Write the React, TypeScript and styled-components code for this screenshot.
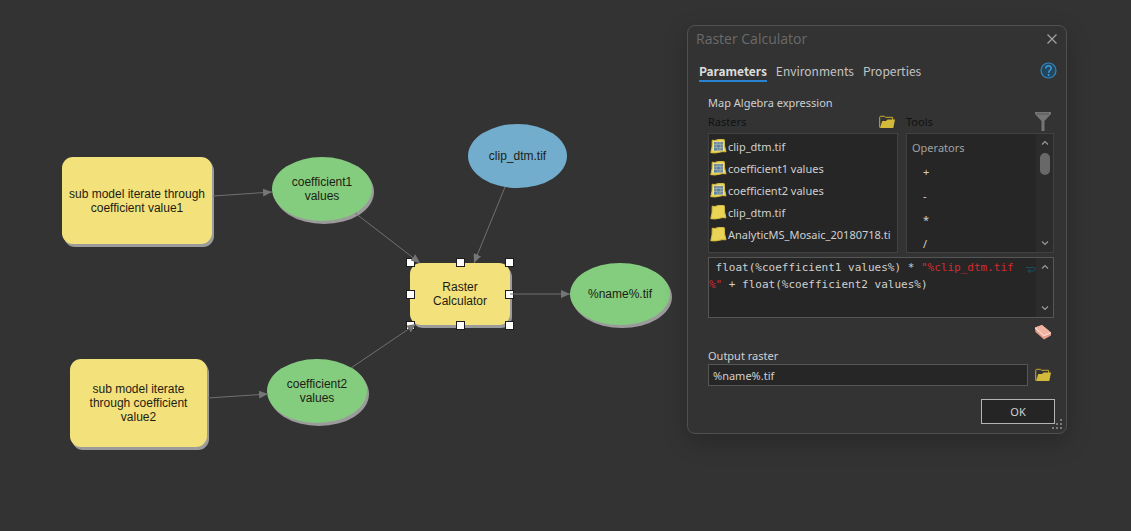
import React, { useState } from "react";
import styled, { createGlobalStyle, css } from "styled-components";

const Global = createGlobalStyle`
  * { box-sizing: border-box; }
  body {
    margin: 0;
    background: #333333;
    color: #d0d0d0;
    font-family: "Noto Sans CJK SC", "Noto Sans", sans-serif;
    font-size: 12px;
    line-height: 16px;
  }
  button, input { font: inherit; color: inherit; margin: 0; padding: 0; }
`;

const Canvas = styled.main`
  position: relative;
  min-height: 100vh;
  overflow: hidden;
  background: #333333;
`;

type NodeProps = {
  $x: number;
  $y: number;
  $w: number;
  $h: number;
  $kind: "tool" | "derived" | "input";
};

const fills = { tool: "#f3e17b", derived: "#84cc7e", input: "#72adcd" };

const DiagramNode = styled.div<NodeProps>`
  position: absolute;
  left: ${(p) => p.$x}px;
  top: ${(p) => p.$y}px;
  width: ${(p) => p.$w}px;
  height: ${(p) => p.$h}px;
  display: flex;
  align-items: center;
  justify-content: center;
  text-align: center;
  white-space: pre-line;
  background: ${(p) => fills[p.$kind]};
  border-radius: ${(p) => (p.$kind === "tool" ? "11px" : "50%")};
  color: #1d1d14;
  font-family: "Liberation Sans", Arial, sans-serif;
  font-size: 12px;
  line-height: 14px;
  ${(p) =>
    p.$kind !== "input" &&
    css`
      box-shadow: 1px 1px 0 #9b9b9b, 2px 3px 0 #9b9b9b;
    `}
`;

const Edges = styled.svg`
  position: absolute;
  left: 0;
  top: 0;
  pointer-events: none;
`;

const Handle = styled.span<{ $x: number; $y: number }>`
  position: absolute;
  left: ${(p) => p.$x}px;
  top: ${(p) => p.$y}px;
  width: 9px;
  height: 9px;
  background: #ffffff;
  border: 1px solid #1c1c1c;
`;

const Dialog = styled.section`
  position: absolute;
  top: 25px;
  right: 64px;
  width: 380px;
  display: flex;
  flex-direction: column;
  background: #333333;
  border: 1px solid #505050;
  border-radius: 8px;
  box-shadow: 0 8px 24px rgba(0, 0, 0, 0.22);
`;

const TitleBar = styled.header`
  display: flex;
  align-items: center;
  justify-content: space-between;
  height: 26px;
  padding: 0 8px;
`;

const Title = styled.h1`
  margin: 0;
  font-family: "Open Sans", "Noto Sans", sans-serif;
  font-size: 14px;
  line-height: 20px;
  font-weight: 400;
  color: #6a6a6a;
`;

const IconButton = styled.button`
  display: flex;
  align-items: center;
  justify-content: center;
  background: none;
  border: 0;
  flex: none;
`;

const TabRow = styled.div`
  display: flex;
  align-items: flex-start;
  justify-content: space-between;
  padding: 10px 9px 0 11px;
`;

const Tabs = styled.div`
  display: flex;
  gap: 9px;
`;

const Tab = styled.button<{ $active: boolean }>`
  height: 20px;
  background: none;
  border: 0;
  border-bottom: 2px solid ${(p) => (p.$active ? "#2a84d2" : "transparent")};
  color: ${(p) => (p.$active ? "#dcdcdc" : "#c4c4c4")};
  font-weight: ${(p) => (p.$active ? 700 : 400)};
`;

const Body = styled.div`
  display: flex;
  flex-direction: column;
  padding: 13px 11px 9px 20px;
  font-family: "Noto Sans", "Open Sans", sans-serif;
  font-size: 11px;
`;

const Label = styled.label`
  display: block;
`;

const Lists = styled.div`
  display: grid;
  grid-template-columns: 190px 1fr;
  column-gap: 8px;
`;

const ListHead = styled.div`
  display: flex;
  align-items: center;
  justify-content: space-between;
  height: 22px;
  padding-right: 3px;
  color: #111111;
`;

const ListBox = styled.div`
  display: flex;
  height: 120px;
  background: #262626;
  border: 1px solid #414141;
  overflow: hidden;
`;

const Items = styled.ul<{ $row: number }>`
  flex: 1;
  min-width: 0;
  margin: 0;
  padding: 2px 0 0 1px;
  list-style: none;
  overflow: hidden;

  li {
    display: flex;
    align-items: center;
    gap: 1px;
    height: ${(p) => p.$row}px;
    white-space: nowrap;
  }

  svg {
    flex: none;
  }
`;

const GroupName = styled.li`
  padding-left: 4px;
  color: #a2a2a2;
`;

const Operator = styled.li`
  padding-left: 15px;
`;

const ScrollBar = styled.div`
  display: flex;
  flex-direction: column;
  align-items: center;
  width: 17px;
  padding: 5px 0;
  background: #2c2c2c;
  flex: none;
`;

const Thumb = styled.div`
  width: 10px;
  height: 22px;
  margin-top: 6px;
  border-radius: 5px;
  background: #686868;
`;

const Spacer = styled.div`
  flex: 1;
`;

const Expression = styled.div`
  display: flex;
  height: 61px;
  margin-top: 4px;
  background: #262626;
  border: 1px solid #565656;
`;

const Code = styled.div`
  flex: 1;
  min-width: 0;
  padding-top: 1px;
  font-family: "DejaVu Sans Mono", monospace;
  font-size: 11px;
  line-height: 17px;
  white-space: pre;
  outline: none;
`;

const Literal = styled.span`
  color: #d42a30;
`;

const WrapMark = styled.div`
  padding-top: 4px;
  flex: none;
`;

const MainColumn = styled.div`
  display: flex;
  flex-direction: column;
  padding-right: 1px;
`;

const EraserRow = styled.div`
  display: flex;
  justify-content: flex-end;
  padding: 6px 2px 0 0;
  height: 30px;
  align-items: flex-start;
`;

const OutputRow = styled.div`
  display: flex;
  align-items: center;
  gap: 7px;
  padding-right: 3px;
`;

const TextInput = styled.input`
  flex: 1;
  min-width: 0;
  height: 22px;
  padding: 0 4px;
  background: #262626;
  border: 1px solid #565656;
  outline: none;
`;

const Footer = styled.footer`
  display: flex;
  justify-content: flex-end;
  margin-top: 13px;
`;

const OkButton = styled.button`
  width: 74px;
  height: 25px;
  background: #252525;
  border: 1px solid #b4b4b4;
`;

const Grip = styled.svg`
  position: absolute;
  right: 3px;
  bottom: 3px;
`;

const FolderIcon = () => (
  <svg width="16" height="14" viewBox="0 0 16 14" aria-hidden="true">
    <path d="M.7 12.5V2.2L1.4 1.3H5.6L6.5 2.3H13.6V5" fill="none" stroke="#c9ad32" />
    <path d="M1 13 3.2 6H7L8.6 4.6H16L14.3 13Z" fill="#d3ba3a" />
  </svg>
);

const LayerIcon = ({ grid }: { grid: boolean }) => (
  <svg width="17" height="16" viewBox="0 0 17 16" aria-hidden="true">
    <path
      d="M2.2 1.2Q4.5 2 7 .9T14.3 .8Q14 7 16 12.8Q12.5 12.2 9 13.3T.8 13.7Q2.6 8 2.2 1.2Z"
      fill="#e9d456"
      stroke="#d8c03e"
    />
    {grid && (
      <>
        <path d="M3.2 2.5H13.3L14.3 11.8H2.6Z" fill="#e8e1b2" />
        <rect x="4" y="3" width="9" height="8.5" fill="#71889a" />
        <path d="M4 5.7H13M4 8.6H13M7 3V11.5M10 3V11.5" stroke="#a3b4ae" strokeWidth=".8" />
        <rect x="7.3" y="6" width="2.4" height="2.3" fill="#4a7fa8" />
        <rect x="4" y="9" width="2.7" height="2.3" fill="#5285a8" />
      </>
    )}
  </svg>
);

const Chevron = ({ down = false }: { down?: boolean }) => (
  <svg width="8" height="8" viewBox="0 0 8 8" aria-hidden="true">
    <path
      d={down ? "M1 2.5 4 5.5 7 2.5" : "M1 5.5 4 2.5 7 5.5"}
      fill="none"
      stroke="#9a9a9a"
      strokeWidth="1.2"
    />
  </svg>
);

const edges = [
  [213, 196, 272, 192],
  [355, 213, 420, 263],
  [505, 187, 474, 263],
  [510, 294, 570, 294],
  [208, 398, 268, 394],
  [351, 368, 416, 324],
];

const handles = [
  [406, 258], [456, 258], [505, 258],
  [406, 290], [505, 290],
  [406, 321], [456, 321], [505, 321],
];

const rasters = [
  { name: "clip_dtm.tif", grid: true },
  { name: "coefficient1 values", grid: true },
  { name: "coefficient2 values", grid: true },
  { name: "clip_dtm.tif", grid: false },
  { name: "AnalyticMS_Mosaic_20180718.ti", grid: false },
];

const tabNames = ["Parameters", "Environments", "Properties"];

export default function App() {
  const [tab, setTab] = useState("Parameters");
  const [output, setOutput] = useState("%name%.tif");

  return (
    <>
      <Global />
      <Canvas>
        <DiagramNode $kind="tool" $x={62} $y={157} $w={150} $h={87}>
          {"sub model iterate through\ncoefficient value1"}
        </DiagramNode>
        <DiagramNode $kind="tool" $x={70} $y={359} $w={137} $h={88}>
          {"sub model iterate\nthrough coefficient\nvalue2"}
        </DiagramNode>
        <DiagramNode $kind="derived" $x={272} $y={157} $w={100} $h={64}>
          {"coefficient1\nvalues"}
        </DiagramNode>
        <DiagramNode $kind="derived" $x={267} $y={359} $w={100} $h={64}>
          {"coefficient2\nvalues"}
        </DiagramNode>
        <DiagramNode $kind="input" $x={468} $y={124} $w={99} $h={64}>
          clip_dtm.tif
        </DiagramNode>
        <DiagramNode $kind="tool" $x={410} $y={263} $w={100} $h={62}>
          {"Raster\nCalculator"}
        </DiagramNode>
        <DiagramNode $kind="derived" $x={570} $y={263} $w={100} $h={62}>
          %name%.tif
        </DiagramNode>
        {handles.map(([x, y]) => (
          <Handle key={`${x}-${y}`} $x={x} $y={y} />
        ))}
        <Edges width="687" height="531" aria-hidden="true">
          <defs>
            <marker
              id="head"
              markerUnits="userSpaceOnUse"
              markerWidth="9"
              markerHeight="8"
              refX="9"
              refY="4"
              orient="auto"
            >
              <path d="M0 0 9 4 0 8Z" fill="#757575" />
            </marker>
          </defs>
          {edges.map(([x1, y1, x2, y2]) => (
            <line
              key={`${x1}-${y1}`}
              x1={x1}
              y1={y1}
              x2={x2}
              y2={y2}
              stroke="#707070"
              markerEnd="url(#head)"
            />
          ))}
        </Edges>

        <Dialog role="dialog" aria-labelledby="dialog-title">
          <TitleBar>
            <Title id="dialog-title">Raster Calculator</Title>
            <IconButton aria-label="Close">
              <svg width="12" height="12" viewBox="0 0 12 12" aria-hidden="true">
                <path d="M1.5 1.5 10.5 10.5M10.5 1.5 1.5 10.5" stroke="#a0a0a0" strokeWidth="1.3" />
              </svg>
            </IconButton>
          </TitleBar>

          <TabRow>
            <Tabs role="tablist">
              {tabNames.map((name) => (
                <Tab
                  key={name}
                  role="tab"
                  aria-selected={tab === name}
                  $active={tab === name}
                  onClick={() => setTab(name)}
                >
                  {name}
                </Tab>
              ))}
            </Tabs>
            <IconButton aria-label="Help">
              <svg width="17" height="17" viewBox="0 0 17 17" aria-hidden="true">
                <circle cx="8.5" cy="8.5" r="7.5" fill="#23465f" stroke="#3088c4" strokeWidth="1.2" />
                <path
                  d="M5.8 6.5C5.8 2.8 11.2 2.9 11.2 6.2C11.2 8.3 8.6 8.2 8.6 10.8"
                  fill="none"
                  stroke="#3f9bd8"
                  strokeWidth="1.5"
                />
                <circle cx="8.6" cy="13" r="1" fill="#3f9bd8" />
              </svg>
            </IconButton>
          </TabRow>

          <Body>
            <MainColumn>
              <Label id="expression-label">Map Algebra expression</Label>
              <Lists>
                <div>
                  <ListHead>
                    <span>Rasters</span>
                    <IconButton aria-label="Browse rasters">
                      <FolderIcon />
                    </IconButton>
                  </ListHead>
                  <ListBox>
                    <Items $row={22}>
                      {rasters.map((r, i) => (
                        <li key={i}>
                          <LayerIcon grid={r.grid} />
                          <span>{r.name}</span>
                        </li>
                      ))}
                    </Items>
                  </ListBox>
                </div>
                <div>
                  <ListHead>
                    <span>Tools</span>
                    <IconButton aria-label="Filter tools">
                      <svg width="16" height="20" viewBox="0 0 16 20" aria-hidden="true">
                        <path d="M0 0H16V2L9.5 9V19H6.500V9L0 2Z" fill="#757575" />
                        <path d="M2 2H14" stroke="#5a5a5a" />
                      </svg>
                    </IconButton>
                  </ListHead>
                  <ListBox>
                    <Items $row={24}>
                      <GroupName>Operators</GroupName>
                      {["+", "-", "*", "/"].map((op) => (
                        <Operator key={op}>{op}</Operator>
                      ))}
                    </Items>
                    <ScrollBar>
                      <Chevron />
                      <Thumb />
                      <Spacer />
                      <Chevron down />
                    </ScrollBar>
                  </ListBox>
                </div>
              </Lists>

              <Expression>
                <Code
                  role="textbox"
                  aria-multiline="true"
                  aria-labelledby="expression-label"
                  contentEditable
                  suppressContentEditableWarning
                  spellCheck={false}
                >
                  <div>
                    {" float(%coefficient1 values%) * "}
                    <Literal>"%clip_dtm.tif</Literal>
                  </div>
                  <div>
                    <Literal>%"</Literal>
                    {" + float(%coefficient2 values%)"}
                  </div>
                </Code>
                <WrapMark>
                  <svg width="10" height="8" viewBox="0 0 10 8" aria-hidden="true">
                    <path d="M0 1.5H7.5Q9 1.5 9 3T7.5 5H2M4 3 2 5 4 7" fill="none" stroke="#1d4f60" />
                  </svg>
                </WrapMark>
                <ScrollBar>
                  <Chevron />
                  <Spacer />
                  <Chevron down />
                </ScrollBar>
              </Expression>

              <EraserRow>
                <IconButton aria-label="Clear expression">
                  <svg width="18" height="16" viewBox="0 0 18 16" aria-hidden="true">
                    <path d="M1 3.5 8 1 17 8.5V11.5L10 15.5 1.5 8Z" fill="#e39d8a" />
                    <path d="M1 3.5 8 1 17 8.5 9.8 11.5Z" fill="#efb3a2" />
                    <path d="M1.2 4 9.8 11.8 17 8.8" fill="none" stroke="#f8dcd2" strokeWidth="1.1" />
                  </svg>
                </IconButton>
              </EraserRow>

              <Label htmlFor="output-raster">Output raster</Label>
              <OutputRow>
                <TextInput
                  id="output-raster"
                  value={output}
                  onChange={(e) => setOutput(e.target.value)}
                />
                <IconButton aria-label="Browse output raster">
                  <FolderIcon />
                </IconButton>
              </OutputRow>
            </MainColumn>
            <Footer>
              <OkButton>OK</OkButton>
            </Footer>
          </Body>
          <Grip width="11" height="11" viewBox="0 0 11 11" aria-hidden="true">
            <path
              d="M8 0h2v2h-2zM4 4h2v2h-2zM8 4h2v2h-2zM0 8h2v2h-2zM4 8h2v2h-2zM8 8h2v2h-2z"
              fill="#7c7c7c"
            />
          </Grip>
        </Dialog>
      </Canvas>
    </>
  );
}
